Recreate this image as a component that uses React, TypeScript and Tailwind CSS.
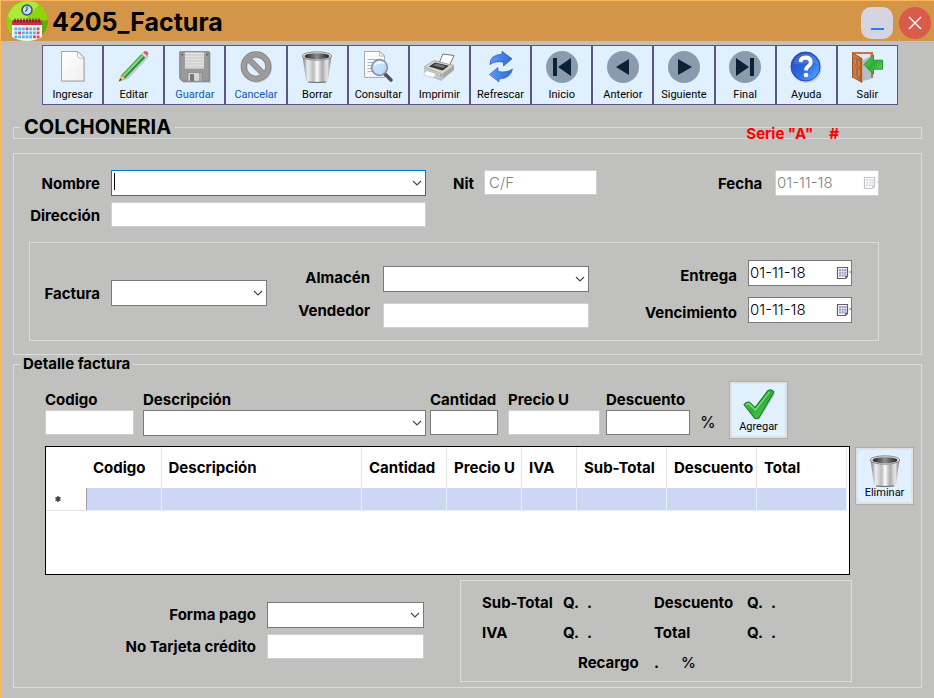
import React from "react";

const labelText = "text-[15px] leading-5 font-bold text-black whitespace-nowrap";
const sideLabel = "pt-0.5 text-right text-[15px] leading-5 font-bold text-black whitespace-nowrap";
const plainBox = "block w-full h-[25px] bg-white border border-[#cfcfcf] px-1 text-[15px] font-light outline-none";
const darkBox = "block w-full h-[25px] bg-white border border-[#7a7a7a] px-1 text-[15px] outline-none";

function Combo({ id, active = false }: { id: string; active?: boolean }) {
  return (
    <div className="relative w-full">
      <select
        id={id}
        className={
          active
            ? "block w-full h-[26px] appearance-none bg-white border border-[#0078d7] px-1 text-[15px] outline-none"
            : "block w-full h-[26px] appearance-none bg-white border border-[#7a7a7a] px-1 text-[15px] outline-none"
        }
      >
        <option value=""></option>
      </select>
      {active && <span className="pointer-events-none absolute left-[3px] top-[3px] h-[17px] w-px bg-black" />}
      <svg className="pointer-events-none absolute right-1 top-[9px]" width="10" height="8" viewBox="0 0 10 8" fill="none" stroke="#444" strokeWidth="1.1">
        <path d="M1 2l4 4 4-4" />
      </svg>
    </div>
  );
}

function DateBox({ id, disabled = false }: { id: string; disabled?: boolean }) {
  return (
    <div
      className={
        disabled
          ? "flex h-[26px] w-[104px] shrink-0 items-center border border-[#cfcfcf] bg-white text-[#838383]"
          : "flex h-[26px] w-[104px] shrink-0 items-center border border-[#7a7a7a] bg-white text-black"
      }
    >
      <input id={id} type="text" defaultValue="01-11-18" disabled={disabled} className="min-w-0 flex-1 bg-transparent pl-px text-[15px] font-light outline-none" />
      <svg className={disabled ? "opacity-35" : ""} width="15" height="14" viewBox="0 0 15 14">
        <path d="M1.500 1.500h10v9l-2 2h-8z" fill="#fff" stroke="#6b5a5e" strokeWidth="1.200" />
        <path d="M3 3h7.500v7.500H3z" fill="#98a3c4" />
        <path d="M3 5.500h7.500M3 8h7.500M5.500 3v7.500M8 3v7.500" stroke="#e9edf7" strokeWidth=".7" />
        <path d="M9.300 12.600v-2.600h2.600z" fill="#6b5a5e" />
        <path d="M13.500 5.500h1.500v1h-1.500z" fill="#345" />
      </svg>
    </div>
  );
}

function Defs() {
  return (
    <svg width="0" height="0" className="absolute" aria-hidden="true">
      <defs>
        <linearGradient id="metal" x1="0" x2="1">
          <stop offset="0" stopColor="#777" />
          <stop offset=".18" stopColor="#eee" />
          <stop offset=".38" stopColor="#bbb" />
          <stop offset=".5" stopColor="#fdfdfd" />
          <stop offset=".68" stopColor="#aaa" />
          <stop offset=".85" stopColor="#e8e8e8" />
          <stop offset="1" stopColor="#777" />
        </linearGradient>
        <linearGradient id="hole" x1="0" x2="1">
          <stop offset="0" stopColor="#222" />
          <stop offset=".5" stopColor="#8c8c8c" />
          <stop offset="1" stopColor="#222" />
        </linearGradient>
        <linearGradient id="paper" x1="0" y1="0" x2="1" y2="1">
          <stop offset="0" stopColor="#fff" />
          <stop offset="1" stopColor="#efefef" />
        </linearGradient>
        <linearGradient id="blue" x1="0" y1="0" x2="1" y2="1">
          <stop offset="0" stopColor="#2343b4" />
          <stop offset=".55" stopColor="#2e6be0" />
          <stop offset="1" stopColor="#5db8fa" />
        </linearGradient>
        <linearGradient id="arrow" x1="0" y1="0" x2="1" y2="0">
          <stop offset="0" stopColor="#5b9cf2" />
          <stop offset="1" stopColor="#2f68d8" />
        </linearGradient>
        <linearGradient id="green" x1="0" y1="0" x2="1" y2="1">
          <stop offset="0" stopColor="#5fd65a" />
          <stop offset=".5" stopColor="#2cae35" />
          <stop offset="1" stopColor="#72d860" />
        </linearGradient>
        <linearGradient id="door" x1="0" x2="1">
          <stop offset="0" stopColor="#d9854a" />
          <stop offset="1" stopColor="#b4602b" />
        </linearGradient>
      </defs>
    </svg>
  );
}

function Glyph({ children }: { children: React.ReactNode }) {
  return (
    <svg width="32" height="32" viewBox="0 0 32 32" aria-hidden="true" className="shrink-0">
      {children}
    </svg>
  );
}

const NewIcon = (
  <Glyph>
    <path d="M6 2h17l5 5v24H6z" fill="#b7bdc6" opacity=".6" />
    <path d="M4.500.5H21l6 6v23.500H4.500z" fill="url(#paper)" stroke="#a5a5a5" />
    <path d="M20.500.8v4q0 2.500 2.500 2.300l4 .2z" fill="#fff" stroke="#b5b5b5" strokeWidth=".9" />
  </Glyph>
);
const EditIcon = (
  <Glyph>
    <path d="M3 30.500L9 26 29.500 5l1.500.8L10.500 27.500z" fill="#9fb1c4" opacity=".6" />
    <path d="M3.500 24L23.500 3l4 3.600L7.300 27.500z" fill="#2f8b35" />
    <path d="M4.300 24.300L24 3.700l1.700 1.500L6 26z" fill="#83d577" />
    <path d="M1.200 30.200L3.500 24l3.800 3.500z" fill="#e9c47d" stroke="#a98543" strokeWidth=".5" />
    <path d="M1.200 30.200l.9-2.600 1.600 1.500z" fill="#222" />
    <path d="M23.500 3l1.600-1.700 4 3.600-1.600 1.700z" fill="#e2e2e2" stroke="#999" strokeWidth=".5" />
    <path d="M25.100 1.300Q27.600-1 29.600.9 31.400 2.800 29.100 4.900z" fill="#d9605a" />
  </Glyph>
);
const SaveIcon = (
  <Glyph>
    <path d="M2 2h30v30H4z" fill="#a9b2bc" opacity=".5" />
    <path d="M.8.8h29.500v29.500H3.500L.8 27.500z" fill="#9a9a9a" stroke="#7c7c7c" />
    <path d="M2 2h27v2H2z" fill="#ababab" />
    <path d="M5.500 1h20v17h-20z" fill="#e2e2e2" stroke="#888" strokeWidth=".6" />
    <path d="M6 4h19M6 7h19M6 10h19M6 13h19M6 16h19" stroke="#c4c4c4" />
    <path d="M9 21.500h14v8.700H9z" fill="#d8d8d8" stroke="#777" strokeWidth=".6" />
    <path d="M11 23h4v7h-4z" fill="#777" />
    <path d="M20 22h3v8h-3z" fill="#aaa" />
    <path d="M2.300 2.500h2v2h-2zM27 2.500h2v2h-2z" fill="#666" />
  </Glyph>
);
const CancelIcon = (
  <Glyph>
    <circle cx="16.800" cy="16.500" r="12.300" fill="none" stroke="#a9b2bc" strokeOpacity=".6" strokeWidth="6" />
    <circle cx="16" cy="15.500" r="12.300" fill="none" stroke="#7d7d7d" strokeWidth="6" />
    <path d="M7.500 7l17 17" stroke="#7d7d7d" strokeWidth="6" />
    <circle cx="16" cy="15.500" r="12.300" fill="none" stroke="#9c9c9c" strokeWidth="4.600" />
    <path d="M7.500 7l17 17" stroke="#9c9c9c" strokeWidth="4.600" />
  </Glyph>
);
const BinIcon = (
  <Glyph>
    <path d="M1.500 5h29L27 29q-.4 2.500-3 2.500H8Q5.500 31.500 5 29z" fill="url(#metal)" />
    <ellipse cx="16" cy="5" rx="14.800" ry="4.200" fill="#ddd" stroke="#777" strokeWidth=".8" />
    <ellipse cx="16" cy="5.200" rx="12.300" ry="3" fill="url(#hole)" />
    <path d="M7 31q9 1 18 0" stroke="#666" fill="none" />
  </Glyph>
);
const SearchIcon = (
  <Glyph>
    <path d="M2.500.5H18l4.500 4.500v21.500h-20z" fill="url(#paper)" stroke="#aaa" />
    <path d="M17.500.8V5h5z" fill="#fff" stroke="#aaa" strokeWidth=".8" />
    <path d="M5.500 8.500h11M5.500 11.500h7M5.500 14.500h5M5.500 17.500h5M5.500 20.500h7" stroke="#a9b5c9" strokeWidth="1" />
    <path d="M22.500 22.500l6.500 6.500" stroke="#4c5057" strokeWidth="3.600" strokeLinecap="round" />
    <circle cx="17.500" cy="16.500" r="7.800" fill="#b8dcf7" fillOpacity=".85" stroke="#8391ad" strokeWidth="1.700" />
    <path d="M12 15q1-5 6.500-5 3.500.3 5 3-6-1.500-11.500 2z" fill="#fff" opacity=".75" />
  </Glyph>
);
const PrintIcon = (
  <Glyph>
    <path d="M3 24l16 3 13-9-14 12z" fill="#98a4b0" opacity=".6" />
    <path d="M16.500 11l3.500-8 11 1.500-4.500 10z" fill="#fff" stroke="#777" />
    <path d="M1 16l10-6.500L31 14.500 19.500 23z" fill="#d5d5d3" stroke="#8d8d8d" strokeWidth=".6" />
    <path d="M6 15.500l6-4 14 3.200-6.500 4.800z" fill="#343434" />
    <path d="M10 14.500l3-2 10 2.500-3 2z" fill="#777" />
    <path d="M1 16l18.500 7v5L1 21z" fill="#c4c4c1" />
    <path d="M19.500 23L31 14.500V19l-11.500 9z" fill="#a6a7a5" />
    <path d="M3.500 19.500l9.500 3.200-2.500 4L.5 24z" fill="#fff" stroke="#bbb" strokeWidth=".6" />
    <path d="M17 23.300l1.500.6v1.500l-1.500-.5z" fill="#57bc43" />
  </Glyph>
);
const RefreshIcon = (
  <Glyph>
    <path d="M5 13.500Q4.500 4 17 3.200V.3l10 7.500-8.500 7.200v-3.800Q10 9.500 5 13.500z" fill="url(#arrow)" stroke="#2b52b5" strokeWidth=".7" />
    <path d="M27.500 18q-2 9.800-13.500 10v3L4.500 23.500 13 16.500v4Q22 22 27.500 18z" fill="url(#arrow)" stroke="#2b63c5" strokeWidth=".7" />
  </Glyph>
);
const disc = <circle cx="16" cy="16" r="16" fill="#8a9bae" />;
const FirstIcon = (
  <Glyph>
    {disc}
    <path d="M7 7h4v18H7zM25 7v18L12 16z" fill="#0b2138" />
  </Glyph>
);
const PrevIcon = (
  <Glyph>
    {disc}
    <path d="M22 8v16L9 16z" fill="#0b2138" />
  </Glyph>
);
const NextIcon = (
  <Glyph>
    {disc}
    <path d="M10 8v16l14-8z" fill="#0b2138" />
  </Glyph>
);
const LastIcon = (
  <Glyph>
    {disc}
    <path d="M7 7v18l13-9zM21 7h4v18h-4z" fill="#0b2138" />
  </Glyph>
);
const HelpIcon = (
  <Glyph>
    <circle cx="16.500" cy="17" r="15" fill="#9fb1c4" opacity=".6" />
    <circle cx="15.500" cy="15.500" r="14.500" fill="url(#blue)" stroke="#2448ad" />
    <path d="M3 13Q5 2.500 15.500 2.500T28 13q-6-3-12.500-1T3 13z" fill="#fff" opacity=".13" />
    <path d="M10.500 11q.3-4.500 5.200-4.500 5 .2 5 4.500 0 2.500-2.500 4.200-2.200 1.500-2.200 4.300" fill="none" stroke="#fff" strokeWidth="3.800" />
    <circle cx="16" cy="24" r="2.300" fill="#fff" />
  </Glyph>
);
const ExitIcon = (
  <Glyph>
    <path d="M1 1h21v26H1z" fill="#c3753d" />
    <path d="M3.500 3h16v25H11z" fill="#e3e8ec" />
    <path d="M12 9l8-4v23l-8 2z" fill="#b5bdc6" />
    <path d="M1.500 2L11 7.500V31.500L1.500 26z" fill="url(#door)" stroke="#8e4b20" strokeWidth=".8" />
    <path d="M3 6.500l2.300 1.300v6.500L3 13zM6.700 8.500L9 9.800v6.500L6.700 15zM3 15.500l2.300 1.300V24L3 22.700zM6.700 17.700L9 19v7.300L6.700 25z" fill="#d88c55" stroke="#8e4b20" strokeWidth=".5" />
    <path d="M13 13.500L22.500 4v5.200H31.500v9h-9v5z" fill="url(#green)" stroke="#1f8a27" strokeWidth=".9" />
  </Glyph>
);
const CheckIcon = (
  <Glyph>
    <path d="M3 18l5-2 6 6L27 3l5 2-16 26z" fill="#8d9aa8" opacity=".5" />
    <path d="M1 15.500q3.500-4 6.500-1.300l4.500 4.500L25 1.500Q29-.5 31 3L16 28.500q-2.500 2.500-5 0z" fill="url(#green)" stroke="#177d22" strokeWidth="1.100" />
    <path d="M3 15.500l3-1 6.200 6.700L26.500 3" fill="none" stroke="#8be280" strokeWidth="1.200" />
  </Glyph>
);

const tools = [
  { label: "Ingresar", icon: NewIcon },
  { label: "Editar", icon: EditIcon },
  { label: "Guardar", icon: SaveIcon, off: true },
  { label: "Cancelar", icon: CancelIcon, off: true },
  { label: "Borrar", icon: BinIcon },
  { label: "Consultar", icon: SearchIcon },
  { label: "Imprimir", icon: PrintIcon },
  { label: "Refrescar", icon: RefreshIcon },
  { label: "Inicio", icon: FirstIcon },
  { label: "Anterior", icon: PrevIcon },
  { label: "Siguiente", icon: NextIcon },
  { label: "Final", icon: LastIcon },
  { label: "Ayuda", icon: HelpIcon },
  { label: "Salir", icon: ExitIcon },
];

const columns = [
  { title: "Codigo", width: "w-[75px]" },
  { title: "Descripción", width: "" },
  { title: "Cantidad", width: "w-[85px]" },
  { title: "Precio U", width: "w-[75px]" },
  { title: "IVA", width: "w-[55px]" },
  { title: "Sub-Total", width: "w-[90px]" },
  { title: "Descuento", width: "w-[90px]" },
  { title: "Total", width: "w-[90px]" },
];

function Logo() {
  const cells = [0, 1, 2, 3, 4, 5, 6];
  const red = ["0-3", "1-1", "2-5", "2-6", "0-6", "1-6"];
  return (
    <svg width="42" height="40" viewBox="0 0 42 40" aria-hidden="true">
      <circle cx="21" cy="20" r="20.500" fill="#92d40a" />
      <path d="M2 15A20.500 20.500 0 0 1 33 3.500L12 27z" fill="#b2e83c" />
      <path d="M35 20l7-1a20.500 20.500 0 0 1-14 20L13 38z" fill="#62ad08" />
      <circle cx="21" cy="9" r="5" fill="#bfe0f5" stroke="#31536f" strokeWidth="1.500" />
      <path d="M21 5.500V9l-2 1.500" stroke="#223" fill="none" />
      <path d="M6 24h30v12q-15 8-30 0z" fill="#eef6fc" />
      <path d="M6 20.500q0-1.500 1.500-1.500h27q1.500 0 1.500 1.500V24H6z" fill="#d82c3e" />
      {[9, 12, 15, 18, 21, 24, 27, 30, 33].map((x) => (
        <path key={x} d={`M${x} 17.500v4`} stroke="#333" strokeWidth="1.200" />
      ))}
      {[0, 1, 2].map((r) =>
        cells.map((c) => (
          <rect key={`${r}-${c}`} x={8.5 + c * 3.7} y={26.5 + r * 4} width="2.800" height="2.800" fill={red.includes(`${r}-${c}`) ? "#e8455a" : "#58b1e8"} />
        ))
      )}
    </svg>
  );
}

function ActionButton({ label, icon }: { label: string; icon: React.ReactNode }) {
  return (
    <button type="button" className="flex h-[58px] w-[59px] shrink-0 flex-col items-center border border-[#adadad] bg-[#e1f0ff] pt-[7px] font-['Roboto',sans-serif] text-[11px] leading-3 text-black outline-2 -outline-offset-3 outline-[#e1e1e1]">
      {icon}
      <span>{label}</span>
    </button>
  );
}

export default function App() {
  return (
    <main className="min-h-screen border-l border-t border-[#ffb55a] bg-[#c0c0be] font-['Inter','Liberation_Sans',sans-serif] text-black">
      <Defs />
      <header className="flex h-10 items-center bg-[#d39548] pl-[5px] pr-[3px]">
        <Logo />
        <h1 className="ml-1 flex-1 pt-0.5 text-[25px] leading-8 font-bold">4205_Factura</h1>
        <button type="button" aria-label="Minimizar" className="mt-1 mr-1.5 flex h-8 w-8 items-end justify-center rounded-[10px] bg-[#d4d4e2] pb-[9px]">
          <span className="h-0.5 w-[13px] bg-[#1683ff]" />
        </button>
        <button type="button" aria-label="Cerrar" className="mt-1 flex h-8 w-8 items-center justify-center rounded-full bg-[#d95b4c]">
          <svg width="14" height="14" viewBox="0 0 14 14" stroke="#fff" strokeWidth="1.400">
            <path d="M1 1l12 12M13 1L1 13" />
          </svg>
        </button>
      </header>

      <nav className="mt-1 mr-9 ml-[41px] flex">
        {tools.map((t) => (
          <button
            key={t.label}
            type="button"
            disabled={t.off}
            className={
              t.off
                ? "flex h-[60px] min-w-0 flex-1 flex-col items-center border border-[#5b5688] bg-[#e1f0ff] pt-[5px] font-['Roboto',sans-serif] text-[11px] text-[#0a5cad]"
                : "flex h-[60px] min-w-0 flex-1 flex-col items-center border border-[#5b5688] bg-[#e1f0ff] pt-[5px] font-['Roboto',sans-serif] text-[11px] text-black"
            }
          >
            {t.icon}
            <span className="mt-[5px] leading-[14px]">{t.label}</span>
          </button>
        ))}
      </nav>

      <form className="ml-3 mr-3 pb-2">
        <fieldset className="relative mt-[11px] border border-[#dcdcdc]">
          <legend className="ml-1.5 px-1 text-[20px] leading-[22px] font-bold">COLCHONERIA</legend>
          <p className="absolute right-[82px] -top-3.5 flex gap-4 text-[15px] leading-5 font-bold text-[#ff0000]">
            <span>Serie "A"</span>
            <span>#</span>
          </p>
        </fieldset>

        <section className="mt-[14px] border border-[#dcdcdc] pt-4 pb-[13px]">
          <div className="flex items-start pr-[42px]">
            <div className="grid min-w-0 flex-1 grid-cols-[86px_1fr] items-center gap-x-[11px] gap-y-1.5">
              <label htmlFor="nombre" className={sideLabel}>Nombre</label>
              <Combo id="nombre" active />
              <label htmlFor="direccion" className={sideLabel}>Dirección</label>
              <input id="direccion" type="text" className={plainBox} />
            </div>
            <label htmlFor="nit" className={`${labelText} mt-1 ml-[27px] w-[31px]`}>Nit</label>
            <div className="w-[113px] shrink-0">
              <input id="nit" type="text" placeholder="C/F" className={`${plainBox} placeholder:text-[#838383]`} />
            </div>
            <label htmlFor="fecha" className={`${labelText} mt-1 ml-[121px] w-[57px]`}>Fecha</label>
            <DateBox id="fecha" disabled />
          </div>

          <div className="mt-[15px] mr-[42px] ml-[15px] flex items-start border border-[#dcdcdc] pt-[17px] pr-[26px] pb-3">
            <div className="mt-5 grid grid-cols-[70px_156px] items-center gap-x-[11px]">
              <label htmlFor="factura" className={sideLabel}>Factura</label>
              <Combo id="factura" />
            </div>
            <div className="mt-1.5 ml-[28px] grid min-w-0 flex-1 grid-cols-[75px_1fr] items-start gap-x-[13px] gap-y-[11px]">
              <label htmlFor="almacen" className={sideLabel}>Almacén</label>
              <Combo id="almacen" />
              <label htmlFor="vendedor" className="-mt-1 pt-0.5 text-right text-[15px] leading-5 font-bold whitespace-nowrap">Vendedor</label>
              <input id="vendedor" type="text" className={plainBox} />
            </div>
            <div className="ml-[48px] grid grid-cols-[100px_104px] items-center gap-x-[11px] gap-y-[11px]">
              <label htmlFor="entrega" className={`${sideLabel} pt-1.5`}>Entrega</label>
              <DateBox id="entrega" />
              <label htmlFor="vencimiento" className={`${sideLabel} pt-1.5`}>Vencimiento</label>
              <DateBox id="vencimiento" />
            </div>
          </div>
        </section>

        <fieldset className="-mt-px min-w-0 border border-[#dcdcdc] pb-[5px]">
          <legend className="ml-1.5 px-[3px] text-[15px] leading-5 font-bold">Detalle factura</legend>
          <div className="flex items-start pt-[7px] pr-[133px] pl-[31px]">
            <div className="mt-2 w-[89px]">
              <label htmlFor="codigo" className={`${labelText} block pt-px`}>Codigo</label>
              <input id="codigo" type="text" className={plainBox} />
            </div>
            <div className="mt-2 ml-[9px] min-w-0 flex-1">
              <label htmlFor="descripcion" className={`${labelText} block pt-px`}>Descripción</label>
              <Combo id="descripcion" />
            </div>
            <div className="mt-2 ml-1 w-[68px]">
              <label htmlFor="cantidad" className={`${labelText} block pt-px`}>Cantidad</label>
              <input id="cantidad" type="text" className={darkBox} />
            </div>
            <div className="mt-2 ml-[10px] w-[92px]">
              <label htmlFor="precio" className={`${labelText} block pt-px`}>Precio U</label>
              <input id="precio" type="text" className={plainBox} />
            </div>
            <div className="mt-2 ml-1.5 w-[84px]">
              <label htmlFor="descuento" className={`${labelText} block pt-px`}>Descuento</label>
              <input id="descuento" type="text" className={darkBox} />
            </div>
            <span className="mt-[31px] ml-[10px] mr-[13px] w-4 text-[16px] leading-5">%</span>
            <ActionButton label="Agregar" icon={CheckIcon} />
          </div>

          <div className="mt-[7px] flex items-start pr-[7px] pl-[31px]">
            <div className="min-h-[129px] min-w-0 flex-1 border border-black bg-white pr-0.5">
              <table className="w-full table-fixed border-collapse text-left">
                <thead>
                  <tr className="h-[41px]">
                    <th className="w-10" />
                    {columns.map((c) => (
                      <th key={c.title} scope="col" className={`${c.width} border-r border-[#e3e3e3] pl-[7px] text-[15px] leading-5 font-bold whitespace-nowrap`}>
                        {c.title}
                      </th>
                    ))}
                  </tr>
                </thead>
                <tbody>
                  <tr className="h-[22px]">
                    <td className="border-r border-b border-r-[#a0a0a0] border-b-[#e3e3e3] p-0">
                      <svg className="ml-2" width="8" height="8" viewBox="0 0 8 8" stroke="#555" strokeWidth="1.300">
                        <path d="M4 1v6M1.400 2.500l5.200 3M6.600 2.500l-5.200 3" />
                        <circle cx="4" cy="4" r="1.800" fill="#333" />
                      </svg>
                    </td>
                    {columns.map((c) => (
                      <td key={c.title} className="border-r border-b border-[#e1f0ff] bg-[#cdd7f5] p-0" />
                    ))}
                  </tr>
                </tbody>
              </table>
            </div>
            <div className="mt-px ml-[5px]">
              <ActionButton label="Eliminar" icon={BinIcon} />
            </div>
          </div>

          <div className="mt-[5px] flex items-start justify-end pr-[69px]">
            <div className="mt-[22px] mr-[36px] grid grid-cols-[auto_157px] items-center gap-x-[11px] gap-y-1.5">
              <label htmlFor="forma" className={`${labelText} text-right`}>Forma pago</label>
              <Combo id="forma" />
              <label htmlFor="tarjeta" className={`${labelText} text-right`}>No Tarjeta crédito</label>
              <input id="tarjeta" type="text" className={plainBox} />
            </div>
            <div className="w-[392px] border border-[#dcdcdc] pt-[7px] pb-[3px] pl-[21px] text-[15px] leading-[30px] font-bold">
              <div className="grid grid-cols-[81px_91px_93px_1fr]">
                <span>Sub-Total</span>
                <span className="flex gap-2"><span>Q.</span><span>.</span></span>
                <span>Descuento</span>
                <span className="flex gap-2"><span>Q.</span><span>.</span></span>
                <span>IVA</span>
                <span className="flex gap-2"><span>Q.</span><span>.</span></span>
                <span>Total</span>
                <span className="flex gap-2"><span>Q.</span><span>.</span></span>
              </div>
              <div className="ml-24 flex">
                <span className="w-[76px]">Recargo</span>
                <span className="w-[27px]">.</span>
                <span className="font-medium">%</span>
              </div>
            </div>
          </div>
        </fieldset>
      </form>
    </main>
  );
}
